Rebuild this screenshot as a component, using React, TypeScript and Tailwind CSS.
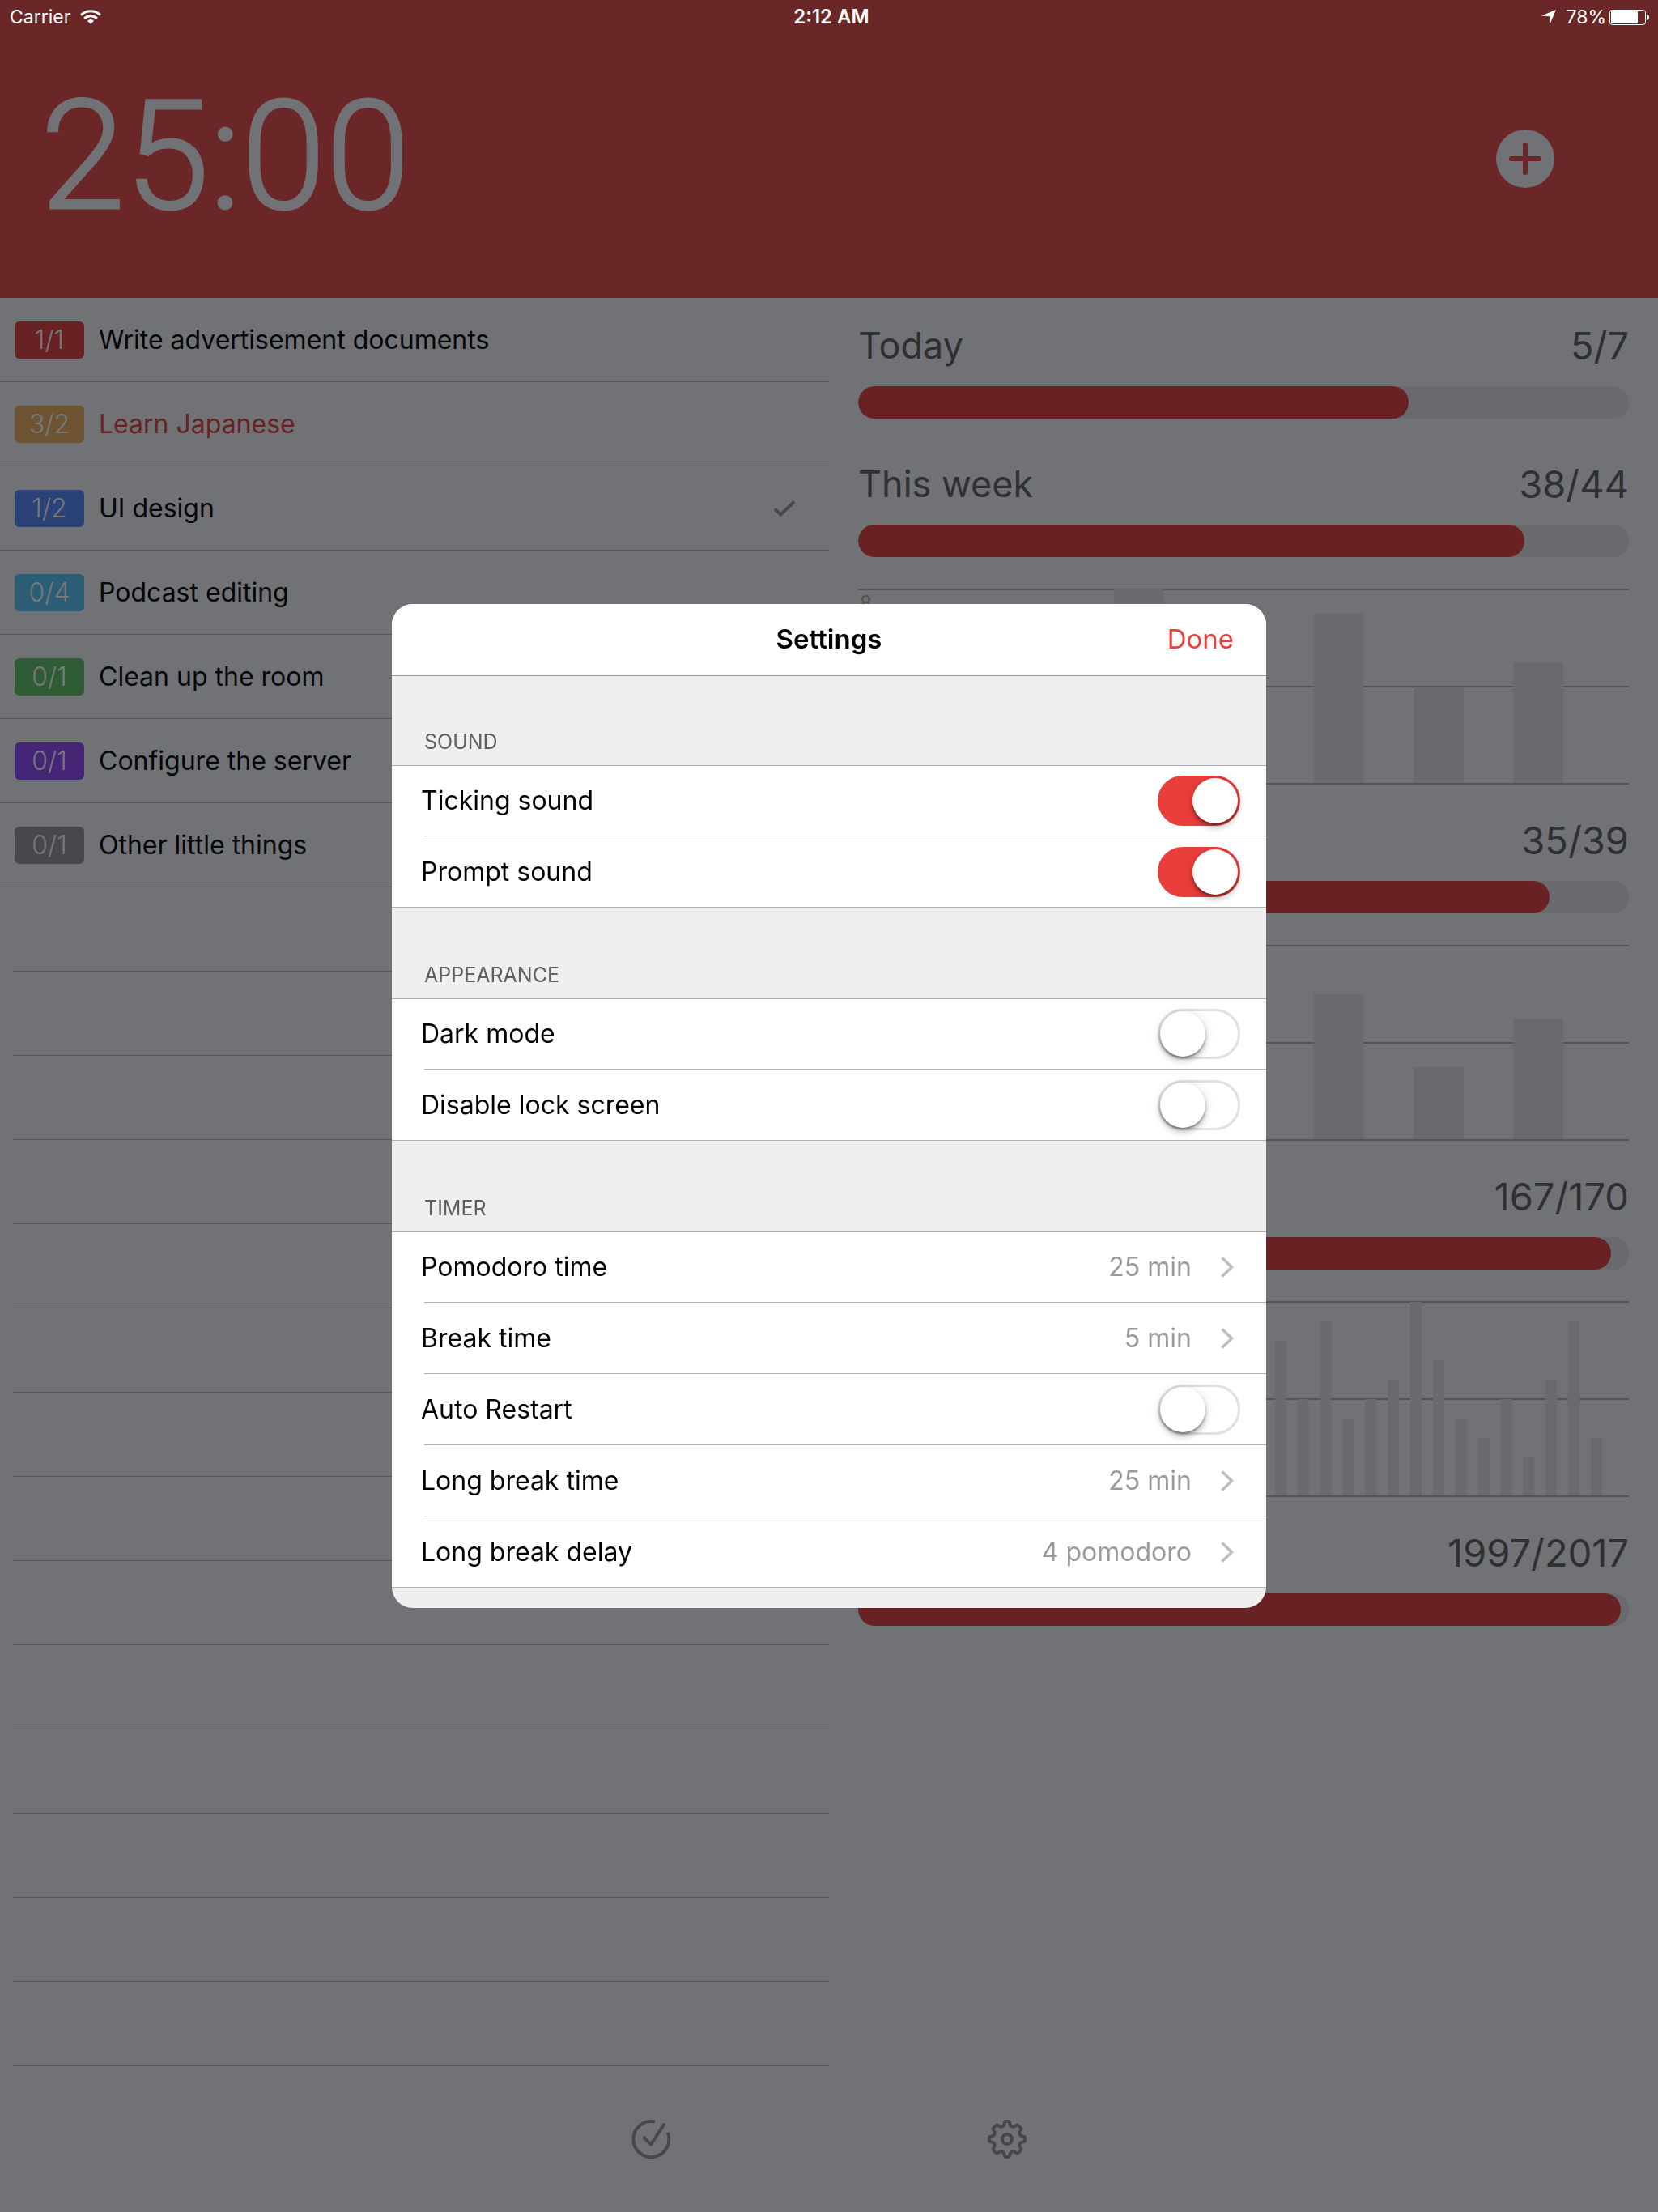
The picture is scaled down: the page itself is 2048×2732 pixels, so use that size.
import React from 'react';

type Task = { count: string; title: string; badge: string; over?: boolean; done?: boolean };

const tasks: Task[] = [
  { count: '1/1', title: 'Write advertisement documents', badge: 'bg-[#692223]' },
  { count: '3/2', title: 'Learn Japanese', badge: 'bg-[#6f5434]', over: true },
  { count: '1/2', title: 'UI design', badge: 'bg-[#2b4276]', done: true },
  { count: '0/4', title: 'Podcast editing', badge: 'bg-[#2b5d74]' },
  { count: '0/1', title: 'Clean up the room', badge: 'bg-[#2f5c34]' },
  { count: '0/1', title: 'Configure the server', badge: 'bg-[#452676]' },
  { count: '0/1', title: 'Other little things', badge: 'bg-[#47484b]' },
];

type Chart = { max: number; pitch: number; bar: number; values: number[] };
type Stat = { label: string; done: number; total: number; percent: number; chart?: Chart };

const stats: Stat[] = [
  { label: 'Today', done: 5, total: 7, percent: 71.4 },
  {
    label: 'This week', done: 38, total: 44, percent: 86.4,
    chart: { max: 8, pitch: 123.33, bar: 61.66, values: [5, 4, 8, 5, 7, 4, 5] },
  },
  {
    label: 'Last week', done: 35, total: 39, percent: 89.7,
    chart: { max: 8, pitch: 123.33, bar: 61.66, values: [5, 6, 4, 6, 6, 3, 5] },
  },
  {
    label: 'This month', done: 167, total: 170, percent: 97.7,
    chart: {
      max: 10, pitch: 27.85, bar: 14,
      values: [4, 6, 5, 7, 3, 8, 5, 6, 4, 7, 5, 9, 6, 3, 5, 4, 8, 5, 9, 4, 5, 6, 10, 7, 4, 3, 5, 2, 6, 9, 3],
    },
  },
  { label: 'Total', done: 1997, total: 2017, percent: 99 },
];

function StatusBar() {
  return (
    <div className="grid h-[42px] grid-cols-3 items-center text-2xl text-white">
      <div className="flex items-center gap-3 pl-3">
        <span className="text-[23px]">Carrier</span>
        <svg className="h-[18px] w-[26px]" viewBox="0 0 26 18" fill="none" stroke="currentColor" aria-label="Wi-Fi">
          <path d="M1 6.600a17.200 17.200 0 0 1 24 0" strokeWidth="3" />
          <path d="M5.200 10.800a11.200 11.200 0 0 1 15.600 0" strokeWidth="3" />
          <path d="M13 17.800 8.900 13.700a5.800 5.800 0 0 1 8.200 0z" fill="currentColor" stroke="none" />
        </svg>
      </div>
      <div className="pl-1.5 text-center font-semibold">2:12 AM</div>
      <div className="flex items-center justify-end pr-[11px]">
        <svg className="mr-3 h-[18px] w-[18px]" viewBox="0 0 18 18" fill="currentColor" aria-label="Location">
          <path d="M18 0 10.400 18 10 8.200 0 7.600z" />
        </svg>
        <span className="mr-1 text-[23px]">78%</span>
        <svg className="h-[19px] w-[49px]" viewBox="0 0 49 19" aria-label="Battery">
          <rect x="0.5" y="0.5" width="44" height="18" rx="3" fill="none" stroke="#fff" />
          <rect x="2" y="2" width="33" height="15" rx="1" fill="#fff" />
          <path d="M46 6c2 0 3 1.600 3 3.500S48 13 46 13z" fill="#fff" />
        </svg>
      </div>
    </div>
  );
}

function Header() {
  return (
    <header className="h-[368px] bg-[#6b2727]">
      <StatusBar />
      <div className="flex h-[308px] items-center justify-between pr-32 pl-[50px]">
        <time className="mb-1.5 font-[Roboto] text-[188px] leading-none font-light text-[#717276] [-webkit-text-stroke:3px_#717276]">25:00</time>
        <button type="button" aria-label="Add task" className="rounded-full">
          <svg className="size-[72px]" viewBox="0 0 72 72">
            <circle cx="36" cy="36" r="36" fill="#717276" />
            <path d="M36 19v34M19 36h34" stroke="#6b2727" strokeWidth="6" strokeLinecap="round" />
          </svg>
        </button>
      </div>
    </header>
  );
}

function TaskList() {
  return (
    <ul>
      {tasks.map((t) => (
        <li key={t.title} className="flex h-[104px] items-center border-b border-[#55565a] pr-[41px] pl-[18px]">
          <span className={`flex h-[46px] w-[86px] items-center justify-center rounded-md text-[32px] font-light text-[#77787c] ${t.badge}`}>
            {t.count}
          </span>
          <span className={`ml-[18px] flex-1 text-[32px] ${t.over ? 'text-[#692223]' : 'text-[#050608]'}`}>{t.title}</span>
          {t.done && (
            <svg className="h-5 w-7" viewBox="0 0 28 20" fill="none" stroke="#47484b" strokeWidth="4" aria-label="Current task">
              <path d="M2 10.500 9.500 17.500 26 1.500" />
            </svg>
          )}
        </li>
      ))}
      {Array.from({ length: 14 }, (_, i) => (
        <li key={i} aria-hidden="true" className="ml-4 h-[104px] border-b border-[#55565a]" />
      ))}
    </ul>
  );
}

function BarChart({ chart }: { chart: Chart }) {
  return (
    <div className="relative mt-[39px]">
      <svg className="h-[242px] w-full" viewBox="0 0 952 242" preserveAspectRatio="none">
        {[1, 121, 241].map((y) => (
          <line key={y} x1="0" x2="952" y1={y} y2={y} stroke="#525357" strokeWidth="2" />
        ))}
        {chart.values.map((v, i) => {
          const h = (v / chart.max) * 240 - 1;
          return <rect key={i} x={69.3 + i * chart.pitch} y={240 - h} width={chart.bar} height={h} fill="#696a6e" />;
        })}
      </svg>
      <span className="absolute top-0.5 left-0.5 text-2xl text-[#525357]">{chart.max}</span>
    </div>
  );
}

function Stats() {
  return (
    <div className="px-9 pt-[31px]">
      {stats.map((s) => (
        <section key={s.label} className={s.chart ? 'mb-[41px]' : 'mb-[53px]'}>
          <div className="mb-[22px] flex justify-between leading-[56px] text-[#2f3031]">
            <h2 className="text-[45px]">{s.label}</h2>
            <span className="text-[47px]">{s.done}/{s.total}</span>
          </div>
          <div className="h-10 overflow-hidden rounded-[20px] bg-[#696a6e]">
            <div className="h-full rounded-[20px] bg-[#692223]" style={{ width: `${s.percent}%` }} />
          </div>
          {s.chart && <BarChart chart={s.chart} />}
        </section>
      ))}
    </div>
  );
}

function Toolbar() {
  return (
    <nav className="flex h-[180px] items-center justify-center gap-[392px]">
      <button type="button" aria-label="Tasks">
        <svg className="size-12" viewBox="0 0 48 48" fill="none" stroke="#47484b" strokeWidth="4">
          <path d="M29 2.600A22 22 0 1 0 44.800 16" />
          <path d="M15.500 22 24 30.500 40 6" strokeLinecap="round" strokeLinejoin="round" />
        </svg>
      </button>
      <button type="button" aria-label="Settings">
        <svg className="size-12" viewBox="0 0 48 48" fill="none" stroke="#47484b" strokeWidth="4" strokeLinejoin="round">
          <path d="M20.800 4.200Q21 2 22.500 2h3Q27 2 27.200 4.200C27.600 8.600 31.500 10 34.800 7.300Q36.600 5.900 37.700 7L40.500 9.800Q41.900 11.200 40.700 12.900C38 16.500 39.600 20.400 43.800 20.800Q46 21 46 22.500v3Q46 27 43.800 27.200C39.600 27.600 38 31.500 40.700 35.100Q41.900 36.800 40.500 38.200L37.700 41Q36.600 42.100 34.800 40.700C31.500 38 27.600 39.400 27.200 43.800Q27 46 25.500 46h-3Q21 46 20.800 43.800C20.400 39.400 16.500 38 13.200 40.700Q11.400 42.100 10.300 41L7.500 38.200Q6.100 36.800 7.300 35.100C10 31.500 8.400 27.600 4.200 27.200Q2 27 2 25.500v-3Q2 21 4.200 20.800C8.400 20.400 10 16.500 7.300 12.900Q6.100 11.200 7.500 9.800L10.300 7Q11.400 5.900 13.200 7.300C16.500 10 20.400 8.600 20.800 4.200Z" />
          <circle cx="24" cy="24" r="6" />
        </svg>
      </button>
    </nav>
  );
}

type Setting = { label: string; value?: string; on?: boolean };

const groups: { title: string; items: Setting[] }[] = [
  { title: 'SOUND', items: [{ label: 'Ticking sound', on: true }, { label: 'Prompt sound', on: true }] },
  { title: 'APPEARANCE', items: [{ label: 'Dark mode', on: false }, { label: 'Disable lock screen', on: false }] },
  {
    title: 'TIMER',
    items: [
      { label: 'Pomodoro time', value: '25 min' },
      { label: 'Break time', value: '5 min' },
      { label: 'Auto Restart', on: false },
      { label: 'Long break time', value: '25 min' },
      { label: 'Long break delay', value: '4 pomodoro' },
    ],
  },
];

function SettingRow({ item }: { item: Setting }) {
  if (item.value) {
    return (
      <button type="button" className="flex size-full items-center pr-10 text-left">
        <span className="-ml-1 flex-1">{item.label}</span>
        <span className="mr-9 text-[#9a9a9c]">{item.value}</span>
        <svg className="h-[26px] w-4" viewBox="0 0 16 26" fill="none" stroke="#bcbcc2" strokeWidth="3.500">
          <path d="M1.500 1.500 13.500 13 1.500 24.500" />
        </svg>
      </button>
    );
  }
  return (
    <label className="flex size-full items-center pr-8">
      <span className="-ml-1 flex-1">{item.label}</span>
      <input
        type="checkbox"
        role="switch"
        defaultChecked={item.on}
        className="flex h-[62px] w-[102px] appearance-none rounded-full border-[3px] border-[#e0e0e0] bg-white before:size-14 before:rounded-full before:bg-white before:shadow-[0_5px_7px_rgba(0,0,0,0.25),0_2px_2px_rgba(0,0,0,0.3),0_0_14px_rgba(0,0,0,0.1)] checked:justify-end checked:border-[#ea3e3c] checked:bg-[#ea3e3c]"
      />
    </label>
  );
}

function SettingsDialog() {
  return (
    <div
      role="dialog"
      aria-labelledby="settings-title"
      className="w-[1080px] max-w-full overflow-hidden rounded-[26px] bg-[#efefef] pb-[25px] text-[32px] text-black"
    >
      <div className="grid h-[89px] grid-cols-3 items-center border-b border-[#98989a] bg-white px-10 text-[33px]">
        <h1 id="settings-title" className="col-start-2 text-center font-semibold">Settings</h1>
        <button type="button" className="justify-self-end text-[#ea3e3c]">Done</button>
      </div>
      {groups.map((g, i) => (
        <section key={g.title}>
          <h2 className={`flex items-end pb-[13px] pl-10 text-[25px] leading-8 text-[#606064] ${i === 0 ? 'h-[110px]' : 'h-28'}`}>
            {g.title}
          </h2>
          <ul className="border-y border-[#b0b0b2] bg-white pl-10">
            {g.items.map((item) => (
              <li
                key={item.label}
                className="h-[88px] border-b border-[#b0b0b2] first:h-[87px] last:h-[87px] last:border-b-0"
              >
                <SettingRow item={item} />
              </li>
            ))}
          </ul>
        </section>
      ))}
    </div>
  );
}

export default function App() {
  return (
    <div className="flex min-h-screen flex-col bg-[#717276] font-[Inter,sans-serif]">
      <Header />
      <main className="grid flex-1 grid-cols-2">
        <TaskList />
        <Stats />
      </main>
      <Toolbar />
      <div className="fixed inset-0 flex items-center justify-center">
        <SettingsDialog />
      </div>
    </div>
  );
}
